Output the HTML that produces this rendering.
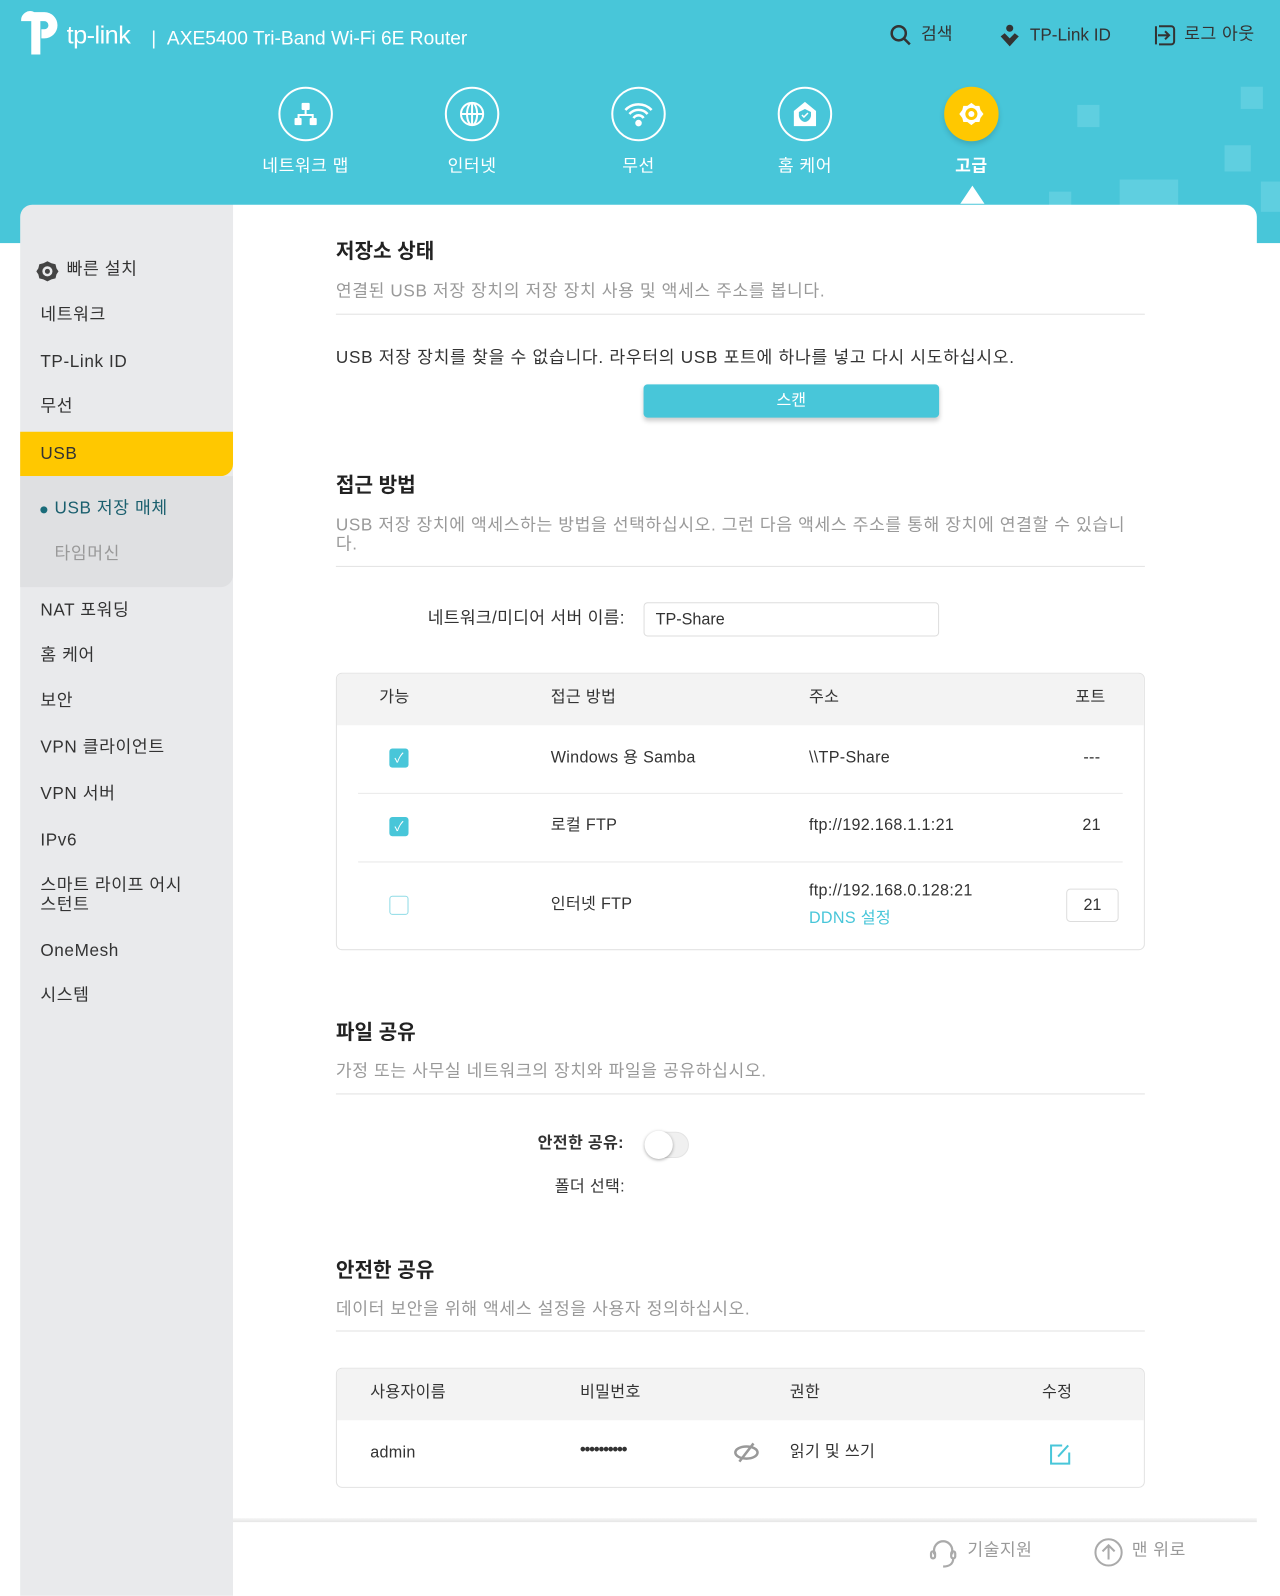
<!DOCTYPE html>
<html><head><meta charset="utf-8"><style>
*{box-sizing:border-box;margin:0;padding:0}
html,body{width:1280px;height:1582px;overflow:hidden;background:#fff}
#w{position:absolute;left:0;top:0;width:1269px;height:1569px;transform:scale(1.0087);transform-origin:0 0;font-family:"Liberation Sans","Noto Sans CJK KR",sans-serif;color:#333}
.a{position:absolute;white-space:nowrap;line-height:1.2}
.hdr{position:absolute;left:0;top:0;width:1269px;height:241px;background:#48c6d9}
.sq{position:absolute;background:#5fcfe0}
.nav{position:absolute;top:86px;width:110px;text-align:center;color:#fff;font-size:17px;letter-spacing:0.5px}
.nav .c{width:54px;height:54px;border:2px solid #fff;border-radius:50%;margin:0 auto 10px;display:flex;align-items:center;justify-content:center}
.side{position:absolute;left:20px;top:203px;width:211px;height:1379px;background:#e9eaec;border-top-left-radius:12px}
.si{position:absolute;left:20px;font-size:17px;color:#333;letter-spacing:0.6px}
.card{position:absolute;left:231px;top:203px;width:1015px;height:1305px;background:#fff;border-top-right-radius:12px}
.h{font-size:20px;font-weight:bold;color:#222}
.d{font-size:17px;color:#999;letter-spacing:0.6px}
.ln{position:absolute;left:333px;width:802px;height:1px;background:#e2e2e2}
.t{font-size:16px;color:#333;letter-spacing:0.3px}
.cb{position:absolute;width:19px;height:19px;border-radius:3px;background:#48c6d9;color:#fff;font-size:13px;text-align:center;line-height:19px}
</style></head><body><div id="w">
<div class="hdr">
 <div class="sq" style="left:1068px;top:104px;width:22px;height:22px"></div>
 <div class="sq" style="left:1230px;top:86px;width:22px;height:22px"></div>
 <div class="sq" style="left:1214px;top:144px;width:26px;height:26px"></div>
 <div class="sq" style="left:1110px;top:178px;width:58px;height:30px"></div>
 <div class="sq" style="left:1250px;top:180px;width:30px;height:30px"></div>
 <div class="sq" style="left:1040px;top:190px;width:22px;height:22px"></div>
</div>
<svg class="a" style="left:18px;top:10px" width="44" height="46" viewBox="0 0 44 46"><path d="M16 2h10a13 13 0 0 1 0 26h-3v-9h3a4 4 0 0 0 0-8h-4v33h-9V11H3a9 9 0 0 1 13-9z" fill="#fff"/></svg>
<div class="a" style="left:66px;top:20px;color:#fff;font-size:25px;letter-spacing:-0.5px">tp-link</div>
<div class="a" style="left:150px;top:28px;color:#fff;font-size:19px">|&nbsp;&nbsp;AXE5400 Tri-Band Wi-Fi 6E Router</div>
<svg class="a" style="left:882px;top:24px" width="22" height="22" viewBox="0 0 22 22"><circle cx="9" cy="9" r="7" fill="none" stroke="#333" stroke-width="2.5"/><path d="M14 14l6 6" stroke="#333" stroke-width="2.5"/></svg>
<div class="a" style="left:913px;top:24px;font-size:17px;color:#333">검색</div>
<svg class="a" style="left:990px;top:24px" width="22" height="24" viewBox="0 0 22 24"><circle cx="11" cy="4" r="3.5" fill="#333"/><path d="M2 12l9 10 9-10-4-3-5 5-5-5z" fill="#333"/></svg>
<div class="a" style="left:1021px;top:25px;font-size:17px;color:#333">TP-Link ID</div>
<svg class="a" style="left:1143px;top:23px" width="24" height="24" viewBox="0 0 24 24"><path d="M6 3h12a3 3 0 0 1 3 3v12a3 3 0 0 1-3 3H6" fill="none" stroke="#333" stroke-width="2"/><path d="M3 3v18M5 12h11M12 8l4 4-4 4" fill="none" stroke="#333" stroke-width="2"/></svg>
<div class="a" style="left:1174px;top:24px;font-size:17px;color:#333;letter-spacing:0.5px">로그 아웃</div>

<div class="nav" style="left:248px"><div class="c"><svg width="26" height="26" viewBox="0 0 26 26" fill="#fff"><rect x="9" y="2" width="8" height="7" rx="1"/><rect x="2" y="17" width="7" height="7" rx="1"/><rect x="17" y="17" width="7" height="7" rx="1"/><path d="M12 9h2v4h7v4h-2v-2H7v2H5v-4h7z"/></svg></div>네트워크 맵</div>
<div class="nav" style="left:413px"><div class="c"><svg width="28" height="28" viewBox="0 0 28 28" fill="none" stroke="#fff" stroke-width="2"><circle cx="14" cy="14" r="11"/><ellipse cx="14" cy="14" rx="5" ry="11"/><path d="M3 14h22M14 3v22"/></svg></div>인터넷</div>
<div class="nav" style="left:578px"><div class="c"><svg width="30" height="26" viewBox="0 0 30 26" fill="none" stroke="#fff" stroke-width="2.5"><path d="M2 9a18 18 0 0 1 26 0M6 13a12 12 0 0 1 18 0M10 17a6 6 0 0 1 10 0"/><circle cx="15" cy="22" r="2" fill="#fff"/></svg></div>무선</div>
<div class="nav" style="left:743px"><div class="c"><svg width="28" height="28" viewBox="0 0 28 28"><path d="M14 2L3 11v15h22V11z" fill="#fff"/><path d="M14 9l6 3v4a7 7 0 0 1-6 6 7 7 0 0 1-6-6v-4z" fill="#48c6d9"/><path d="M11 15l2 2 4-4" stroke="#fff" stroke-width="1.5" fill="none"/></svg></div>홈 케어</div>
<div class="nav" style="left:908px;font-weight:bold"><div class="c" style="background:#ffc800;border-color:#ffc800;box-shadow:0 3px 6px rgba(0,0,0,.15)"><svg width="30" height="30" viewBox="0 0 30 30"><path d="M15 4l4 3h4l1 4 3 4-3 4-1 4h-4l-4 3-4-3H7l-1-4-3-4 3-4 1-4h4z" fill="#fff"/><circle cx="15" cy="15" r="6" fill="#ffc800"/><circle cx="15" cy="15" r="3" fill="#fff"/></svg></div>고급</div>
<div class="a" style="left:952px;top:184px;width:0;height:0;border-left:12px solid transparent;border-right:12px solid transparent;border-bottom:18px solid #fff"></div>

<div class="side"></div>
<div class="card"></div>
<svg class="a" style="left:36px;top:258px" width="22" height="22" viewBox="0 0 22 22"><path d="M11 1l4 2 4 1 1 4 2 3-2 3-1 4-4 1-4 2-4-2-4-1-1-4-2-3 2-3 1-4 4-1z" fill="#444"/><circle cx="11" cy="11" r="5" fill="#e9eaec"/><circle cx="11" cy="11" r="2.5" fill="#444"/></svg>
<div class="a si" style="left:66px;top:257px">빠른 설치</div>
<div class="a si" style="left:40px;top:302px">네트워크</div>
<div class="a si" style="left:40px;top:349px">TP-Link ID</div>
<div class="a si" style="left:40px;top:393px">무선</div>
<div class="a" style="left:20px;top:428px;width:211px;height:44px;background:#ffc800;border-bottom-right-radius:12px"></div>
<div class="a si" style="left:40px;top:440px">USB</div>
<div class="a" style="left:20px;top:472px;width:211px;height:110px;background:#dfe0e2;border-bottom-right-radius:12px"></div>
<div class="a" style="left:40px;top:502px;width:7px;height:7px;border-radius:50%;background:#1a6c7a"></div>
<div class="a si" style="left:54px;top:494px;color:#1a5f6e">USB 저장 매체</div>
<div class="a si" style="left:54px;top:539px;color:#999">타임머신</div>
<div class="a si" style="left:40px;top:595px">NAT 포워딩</div>
<div class="a si" style="left:40px;top:640px">홈 케어</div>
<div class="a si" style="left:40px;top:685px">보안</div>
<div class="a si" style="left:40px;top:731px">VPN 클라이언트</div>
<div class="a si" style="left:40px;top:777px">VPN 서버</div>
<div class="a si" style="left:40px;top:823px">IPv6</div>
<div class="a si" style="left:40px;top:868px;line-height:19px">스마트 라이프 어시<br>스턴트</div>
<div class="a si" style="left:40px;top:933px">OneMesh</div>
<div class="a si" style="left:40px;top:977px">시스템</div>

<div class="a h" style="left:333px;top:238px">저장소 상태</div>
<div class="a d" style="left:333px;top:279px">연결된 USB 저장 장치의 저장 장치 사용 및 액세스 주소를 봅니다.</div>
<div class="ln" style="top:311px"></div>
<div class="a t" style="left:333px;top:345px;font-size:17px;letter-spacing:0.7px">USB 저장 장치를 찾을 수 없습니다. 라우터의 USB 포트에 하나를 넣고 다시 시도하십시오.</div>
<div class="a" style="left:638px;top:381px;width:293px;height:33px;background:#48c6d9;border-radius:4px;box-shadow:0 3px 5px rgba(0,0,0,.2);color:#fff;text-align:center;line-height:33px;font-size:16px">스캔</div>

<div class="a h" style="left:333px;top:470px">접근 방법</div>
<div class="a d" style="left:333px;top:511px;line-height:19px">USB 저장 장치에 액세스하는 방법을 선택하십시오. 그런 다음 액세스 주소를 통해 장치에 연결할 수 있습니<br>다.</div>
<div class="ln" style="top:561px"></div>
<div class="a t" style="left:424px;top:603px;font-size:17px">네트워크/미디어 서버 이름:</div>
<div class="a" style="left:638px;top:597px;width:293px;height:34px;border:1px solid #ddd;border-radius:4px;padding:7px 11px;font-size:16px">TP-Share</div>

<div class="a" style="left:333px;top:667px;width:802px;height:275px;border:1px solid #e2e2e2;border-radius:6px;overflow:hidden">
 <div style="height:51px;background:#f3f3f3"></div>
</div>
<div class="a t" style="left:376px;top:682px">가능</div>
<div class="a t" style="left:546px;top:682px">접근 방법</div>
<div class="a t" style="left:802px;top:682px">주소</div>
<div class="a t" style="left:1066px;top:682px">포트</div>
<div class="cb" style="left:386px;top:742px">✓</div>
<div class="a t" style="left:546px;top:742px">Windows 용 Samba</div>
<div class="a t" style="left:802px;top:742px">\\TP-Share</div>
<div class="a t" style="left:1074px;top:742px">---</div>
<div class="a" style="left:355px;top:786px;width:758px;height:1px;background:#e8e8e8"></div>
<div class="cb" style="left:386px;top:810px">✓</div>
<div class="a t" style="left:546px;top:809px">로컬 FTP</div>
<div class="a t" style="left:802px;top:809px">ftp://192.168.1.1:21</div>
<div class="a t" style="left:1073px;top:809px">21</div>
<div class="a" style="left:355px;top:854px;width:758px;height:1px;background:#e8e8e8"></div>
<div class="cb" style="left:386px;top:888px;background:#fff;border:1.5px solid #8fdbe6"></div>
<div class="a t" style="left:546px;top:887px">인터넷 FTP</div>
<div class="a t" style="left:802px;top:874px">ftp://192.168.0.128:21</div>
<div class="a t" style="left:802px;top:901px;color:#48c6d9">DDNS 설정</div>
<div class="a" style="left:1057px;top:881px;width:52px;height:33px;border:1px solid #ddd;border-radius:4px;text-align:center;line-height:31px;font-size:16px">21</div>

<div class="a h" style="left:333px;top:1012px">파일 공유</div>
<div class="a d" style="left:333px;top:1052px">가정 또는 사무실 네트워크의 장치와 파일을 공유하십시오.</div>
<div class="ln" style="top:1084px"></div>
<div class="a t" style="left:533px;top:1124px;font-weight:bold">안전한 공유:</div>
<div class="a" style="left:640px;top:1122px;width:43px;height:26px;border-radius:13px;background:#f0f0f0;border:1px solid #e4e4e4"></div>
<div class="a" style="left:639px;top:1121px;width:28px;height:28px;border-radius:50%;background:#fff;box-shadow:0 1px 3px rgba(0,0,0,.35)"></div>
<div class="a t" style="left:550px;top:1167px">폴더 선택:</div>

<div class="a h" style="left:333px;top:1248px">안전한 공유</div>
<div class="a d" style="left:333px;top:1288px">데이터 보안을 위해 액세스 설정을 사용자 정의하십시오.</div>
<div class="ln" style="top:1319px"></div>
<div class="a" style="left:333px;top:1356px;width:802px;height:119px;border:1px solid #e2e2e2;border-radius:6px;overflow:hidden"><div style="height:51px;background:#f3f3f3"></div></div>
<div class="a t" style="left:367px;top:1371px">사용자이름</div>
<div class="a t" style="left:575px;top:1371px">비밀번호</div>
<div class="a t" style="left:783px;top:1371px">권한</div>
<div class="a t" style="left:1033px;top:1371px">수정</div>
<div class="a t" style="left:367px;top:1431px">admin</div>
<div class="a t" style="left:575px;top:1428px;font-weight:bold;letter-spacing:-1px">••••••••••</div>
<svg class="a" style="left:727px;top:1430px" width="26" height="20" viewBox="0 0 26 20"><ellipse cx="13" cy="10" rx="11" ry="6" fill="none" stroke="#999" stroke-width="2.5"/><path d="M20 1L6 19" stroke="#999" stroke-width="2.5"/></svg>
<div class="a t" style="left:783px;top:1430px">읽기 및 쓰기</div>
<svg class="a" style="left:1039px;top:1429px" width="24" height="24" viewBox="0 0 24 24" fill="none" stroke="#48c6d9" stroke-width="2"><path d="M14 4H3v18h18V11"/><path d="M10 15l10-11"/></svg>

<div class="a" style="left:231px;top:1505px;width:1015px;height:4px;background:linear-gradient(#f6f6f6,#e6e6e6)"></div>
<svg class="a" style="left:919px;top:1524px" width="32" height="32" viewBox="0 0 32 32" fill="none" stroke="#aaa" stroke-width="2.2"><path d="M7 17v-4a9 9 0 0 1 18 0v4"/><rect x="4" y="14" width="4" height="7" rx="2"/><rect x="24" y="14" width="4" height="7" rx="2"/><path d="M26 21c0 6-5 8-10 8"/></svg>
<div class="a" style="left:959px;top:1527px;font-size:17px;color:#999;letter-spacing:0.5px">기술지원</div>
<svg class="a" style="left:1084px;top:1524px" width="30" height="30" viewBox="0 0 30 30" fill="none" stroke="#aaa" stroke-width="2"><circle cx="15" cy="15" r="13"/><path d="M15 22V8M9 14l6-6 6 6"/></svg>
<div class="a" style="left:1122px;top:1527px;font-size:17px;color:#999;letter-spacing:0.5px">맨 위로</div>
</div></body></html>
